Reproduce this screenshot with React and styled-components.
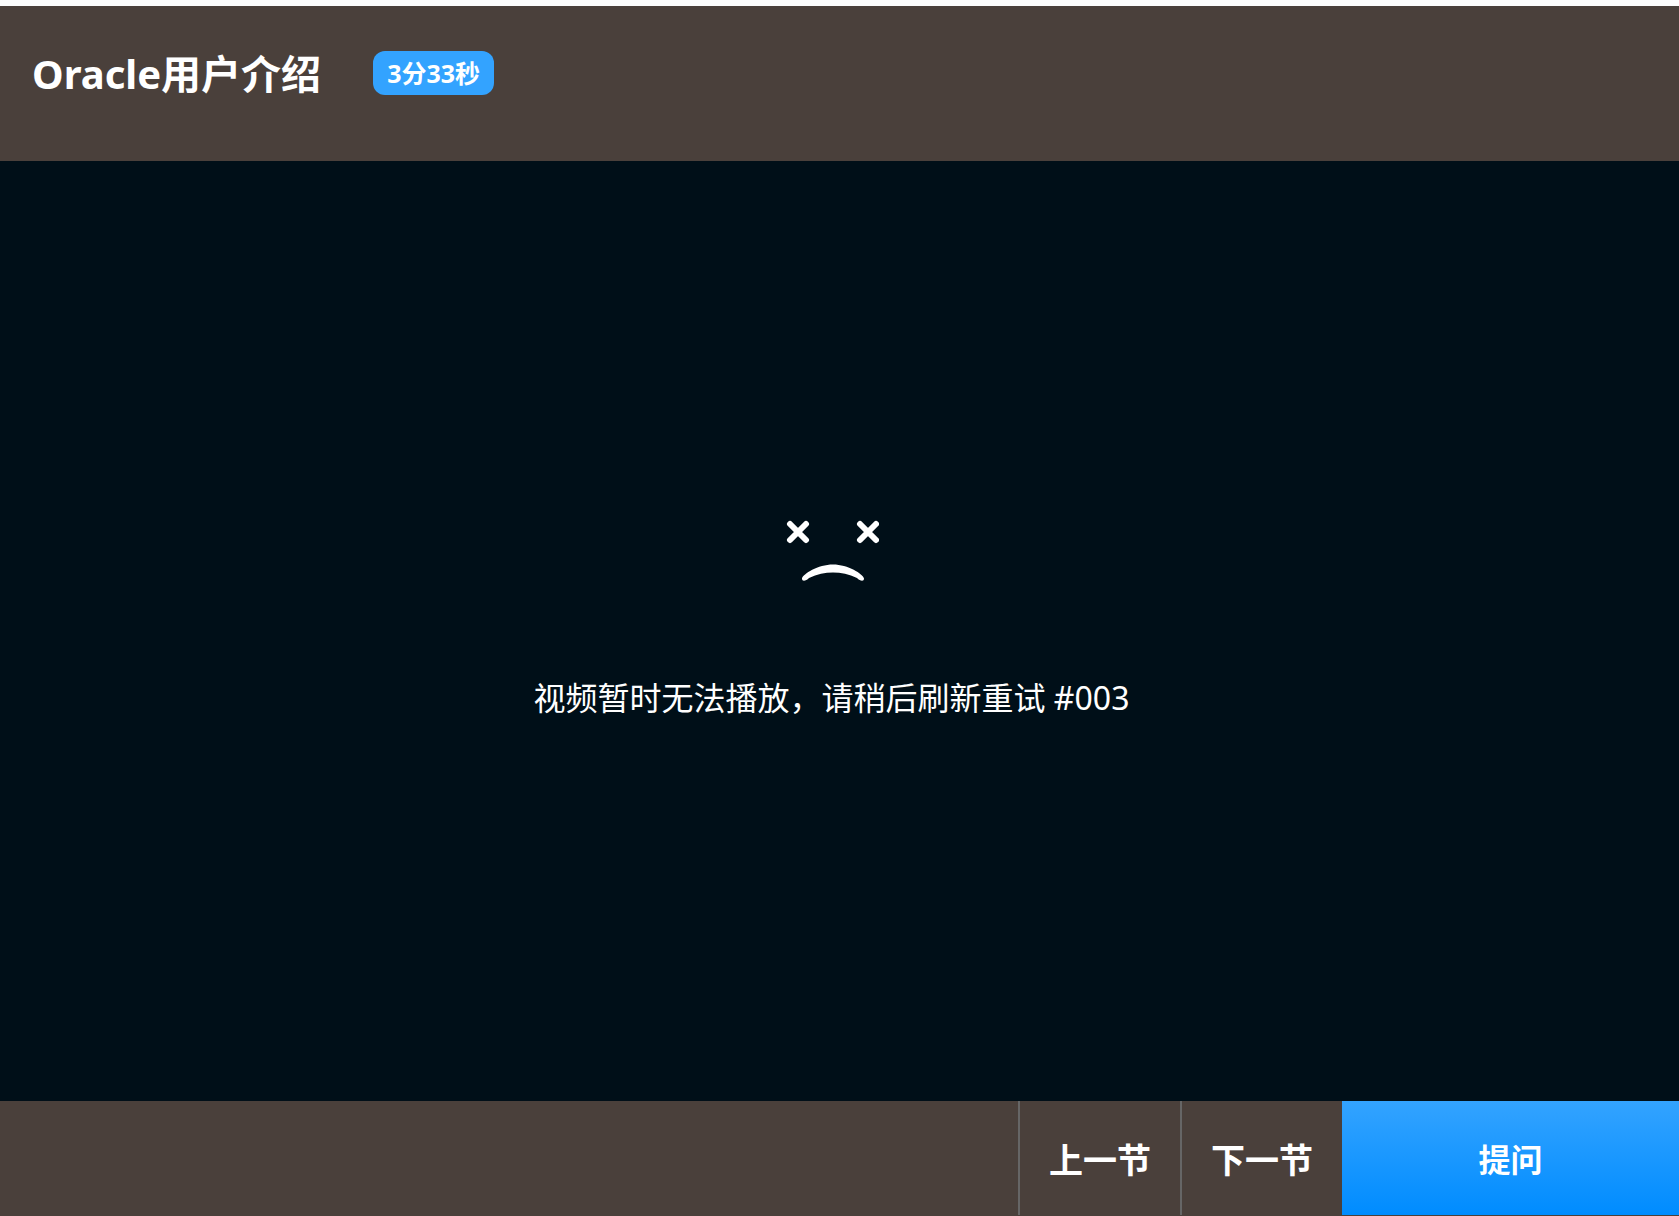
import React from "react";
import styled, { createGlobalStyle } from "styled-components";

const GlobalStyle = createGlobalStyle`
  *, *::before, *::after { box-sizing: border-box; }
  body {
    margin: 0;
    background: #fdfdfd;
    font-family: "Noto Sans", "Noto Sans CJK SC", sans-serif;
    color: #fff;
  }
`;

const Page = styled.div`
  display: flex;
  flex-direction: column;
  min-height: 100vh;
  padding-top: 6px;
`;

const Header = styled.header`
  display: flex;
  align-items: flex-start;
  gap: 52px;
  padding: 40px 32px 60px;
  background: #4a403b;
`;

const Title = styled.h1`
  margin: 0;
  font-size: 40px;
  line-height: 55px;
  font-weight: 700;
`;

const Duration = styled.span`
  margin-top: 5px;
  padding: 0 14px;
  border-radius: 12px;
  background: #33a3ff;
  font-size: 25px;
  line-height: 44px;
  font-weight: 700;
`;

const Stage = styled.main`
  display: flex;
  flex: 1;
  flex-direction: column;
  align-items: center;
  justify-content: center;
  gap: 92px;
  padding: 0 16px 20px 0;
  background: #000f18;
`;

const Message = styled.p`
  margin: 0;
  font-size: 32px;
  line-height: 48px;
`;

const Footer = styled.footer`
  display: flex;
  justify-content: flex-end;
  padding-bottom: 1px;
  background: #4a403b;
`;

const FooterButton = styled.button`
  height: 114px;
  padding: 0;
  border: 0;
  color: #fff;
  font-family: inherit;
  font-weight: 700;
  cursor: pointer;
`;

const SectionButton = styled(FooterButton)`
  width: 162px;
  border-left: 2px solid #666;
  background: transparent;
  font-size: 34px;
`;

const AskButton = styled(FooterButton)`
  width: 337px;
  background: linear-gradient(#33a3ff, #008cff);
  font-size: 32px;
`;

function SadFace() {
  return (
    <svg width="94" height="62" viewBox="-1 0 94 62" fill="none" stroke="#fff" strokeLinecap="round" aria-hidden="true">
      <path d="M4 4 20 20M20 4 4 20M74 4 90 20M90 4 74 20" strokeWidth="6" />
      <path d="M16 58.500C17 54 32 44.500 47 44.500S77 54 78 58.500C78 62 74 61 71 58C63 54 55 52.500 47 52.500S31 54 23 58C20 61 16 62 16 58.500Z" fill="#fff" stroke="none" />
    </svg>
  );
}

export default function App() {
  return (
    <>
      <GlobalStyle />
      <Page>
        <Header>
          <Title>Oracle用户介绍</Title>
          <Duration>3分33秒</Duration>
        </Header>
        <Stage>
          <SadFace />
          <Message role="alert">视频暂时无法播放，请稍后刷新重试 #003</Message>
        </Stage>
        <Footer>
          <SectionButton type="button">上一节</SectionButton>
          <SectionButton type="button">下一节</SectionButton>
          <AskButton type="button">提问</AskButton>
        </Footer>
      </Page>
    </>
  );
}
